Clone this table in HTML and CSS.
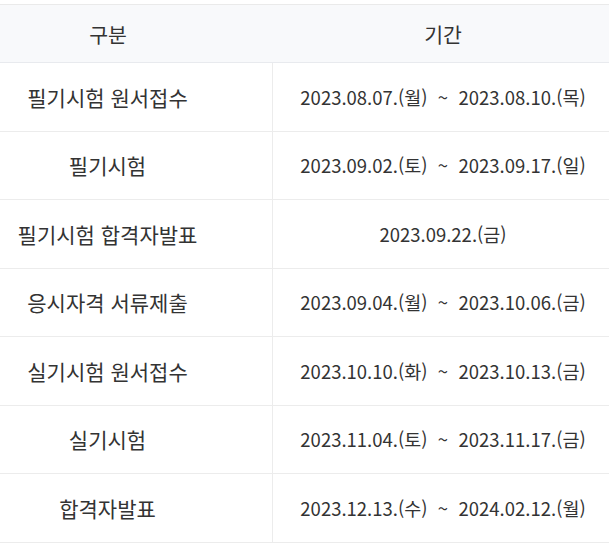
FILE: index.html
```html
<!DOCTYPE html>
<html lang="ko">
<head>
<meta charset="utf-8">
<link rel="stylesheet" href="styles.css">
</head>
<body>
<div class="sched">
  <div class="row head">
    <div class="c1">구분</div>
    <div class="c2">기간</div>
  </div>
  <div class="row"><div class="c1">필기시험 원서접수</div><div class="c2">2023.08.07.(월)&nbsp; ~ &nbsp;2023.08.10.(목)</div></div>
  <div class="row"><div class="c1">필기시험</div><div class="c2">2023.09.02.(토)&nbsp; ~ &nbsp;2023.09.17.(일)</div></div>
  <div class="row"><div class="c1">필기시험 합격자발표</div><div class="c2">2023.09.22.(금)</div></div>
  <div class="row"><div class="c1">응시자격 서류제출</div><div class="c2">2023.09.04.(월)&nbsp; ~ &nbsp;2023.10.06.(금)</div></div>
  <div class="row"><div class="c1">실기시험 원서접수</div><div class="c2">2023.10.10.(화)&nbsp; ~ &nbsp;2023.10.13.(금)</div></div>
  <div class="row"><div class="c1">실기시험</div><div class="c2">2023.11.04.(토)&nbsp; ~ &nbsp;2023.11.17.(금)</div></div>
  <div class="row"><div class="c1">합격자발표</div><div class="c2">2023.12.13.(수)&nbsp; ~ &nbsp;2024.02.12.(월)</div></div>
</div>
</body>
</html>
```
FILE: styles.css
```css
html, body { margin: 0; padding: 0; background: #fff; }
body {
  font-family: "Noto Sans CJK KR", "Noto Sans", sans-serif;
  color: #333;
  font-size: 18px;
}
.sched {
  margin-top: 4px;
  border-top: 1px solid #eaeaea;
}
.row {
  display: grid;
  grid-template-columns: 273px 1fr;
  height: 68.5px;
  border-bottom: 1px solid #ececec;
  box-sizing: border-box;
}
.row.head {
  height: 58px;
  background: #f8f9fb;
  border-bottom: 1px solid #e8eaee;
}
.c1, .c2 {
  display: flex;
  align-items: center;
  justify-content: center;
  white-space: nowrap;
}
.c1 {
  font-size: 21px;
  padding-right: 57px;
  border-right: 1px solid #ececec;
}
.c2 {
  font-size: 18.5px;
  padding-left: 4px;
}
.head .c1, .head .c2 { font-size: 20.5px; }
.head .c1 { border-right: none; }
```
